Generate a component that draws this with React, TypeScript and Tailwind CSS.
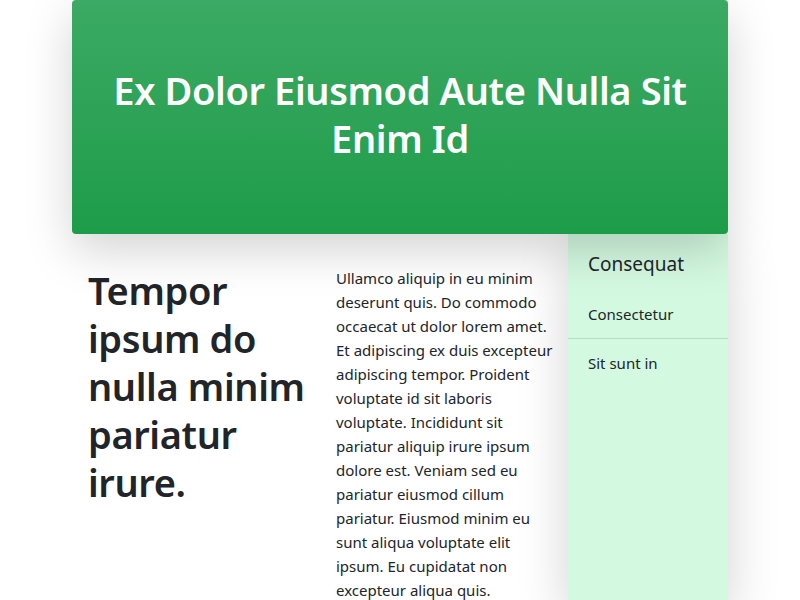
import React from "react";

const bodyLines = [
  "Ullamco aliquip in eu minim",
  "deserunt quis. Do commodo",
  "occaecat ut dolor lorem amet.",
  "Et adipiscing ex duis excepteur",
  "adipiscing tempor. Proident",
  "voluptate id sit laboris",
  "voluptate. Incididunt sit",
  "pariatur aliquip irure ipsum",
  "dolore est. Veniam sed eu",
  "pariatur eiusmod cillum",
  "pariatur. Eiusmod minim eu",
  "sunt aliqua voluptate elit",
  "ipsum. Eu cupidatat non",
  "excepteur aliqua quis.",
];

const headLines = ["Tempor", "ipsum do", "nulla minim", "pariatur", "irure."];

export default function App() {
  return (
    <div
      className="min-h-screen bg-white text-[#212529]"
      style={{ fontFamily: '"Noto Sans", "Open Sans", sans-serif' }}
    >
      <div className="mx-auto w-[656px]">
        <header className="relative z-10 flex h-[234px] items-center justify-center rounded bg-gradient-to-b from-[#3baa64] to-[#1c9c49] px-4 pb-[6px] text-center shadow-[0_16px_48px_rgba(0,0,0,0.175)]">
          <h1 className="text-[38px] font-semibold leading-[48px] tracking-[-0.01em] text-white">
            <span className="block whitespace-nowrap">Ex Dolor Eiusmod Aute Nulla Sit</span>
            <span className="block whitespace-nowrap">Enim Id</span>
          </h1>
        </header>
        <div className="flex">
          <main className="grid flex-1 grid-cols-2 pt-8">
            <div className="px-4">
              <h2 className="text-[38px] font-semibold leading-[48px] tracking-[-0.01em]">
                {headLines.map((l) => (
                  <span key={l} className="block whitespace-nowrap">
                    {l}
                  </span>
                ))}
              </h2>
            </div>
            <div className="px-4">
              <p className="text-[15px] leading-6">
                {bodyLines.map((l) => (
                  <span key={l} className="block whitespace-nowrap">
                    {l}
                  </span>
                ))}
              </p>
            </div>
          </main>
          <aside className="relative w-[160px] min-h-[366px] bg-[#d3f9e0] shadow-[0_16px_48px_rgba(0,0,0,0.175)]">
            <div className="px-5 pt-4 pb-3 text-[19px] leading-7">Consequat</div>
            <div className="border-b border-[#b5dfc4] px-5 pt-3 pb-3 text-[15px] leading-6">
              Consectetur
            </div>
            <div className="px-5 py-3 text-[15px] leading-6">Sit sunt in</div>
          </aside>
        </div>
      </div>
    </div>
  );
}
